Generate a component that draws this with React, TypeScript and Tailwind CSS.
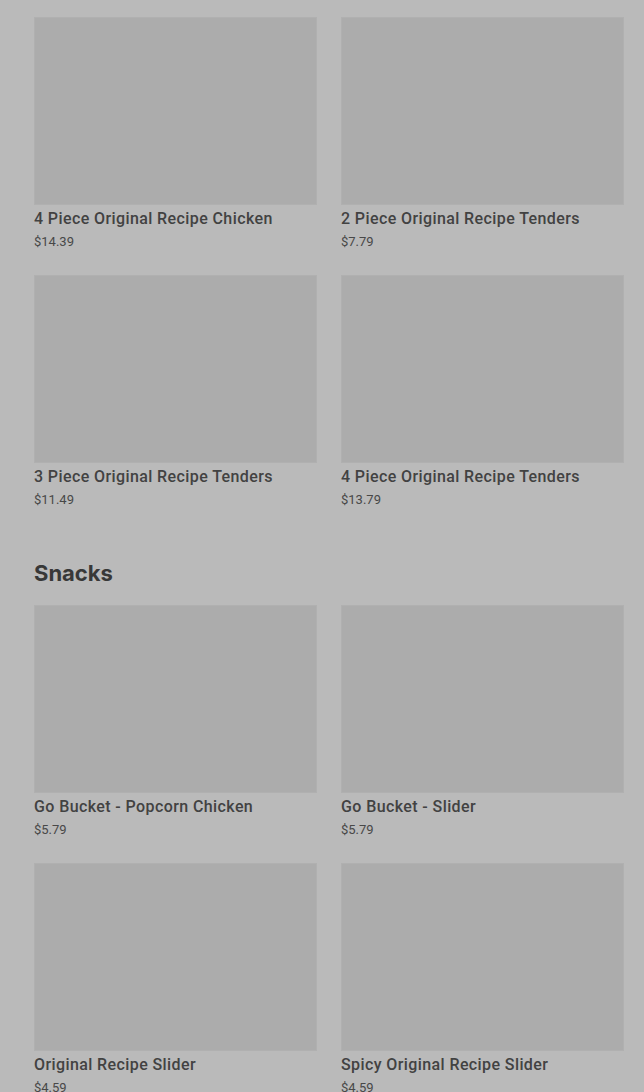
const sections = [
  {
    title: null as string | null,
    items: [
      { name: '4 Piece Original Recipe Chicken', price: '$14.39' },
      { name: '2 Piece Original Recipe Tenders', price: '$7.79' },
      { name: '3 Piece Original Recipe Tenders', price: '$11.49' },
      { name: '4 Piece Original Recipe Tenders', price: '$13.79' },
    ],
  },
  {
    title: 'Snacks',
    items: [
      { name: 'Go Bucket - Popcorn Chicken', price: '$5.79' },
      { name: 'Go Bucket - Slider', price: '$5.79' },
      { name: 'Original Recipe Slider', price: '$4.59' },
      { name: 'Spicy Original Recipe Slider', price: '$4.59' },
    ],
  },
];

export default function App() {
  return (
    <div className="h-[1092px] overflow-hidden bg-[#bababa] pl-[34px] pr-[20px] pt-[17px]" style={{ fontFamily: 'Roboto, "Liberation Sans", sans-serif' }}>
      {sections.map((s, i) => (
        <div key={i} className={i > 0 ? 'mt-[48px]' : ''}>
          {s.title && (
            <h2 className="mb-4 text-[22px] font-bold leading-8 text-[#383838]" style={{ fontFamily: 'Inter, sans-serif' }}>
              {s.title}
            </h2>
          )}
          <div className="grid grid-cols-2 gap-x-6 gap-y-[24px]">
            {s.items.map(item => (
              <div key={item.name}>
                <div className="h-[188px] border border-[#b0b0b0] bg-[#acacac]" />
                <div className="mt-[4px] text-base font-medium leading-5 tracking-[0.4px] text-[#424242]">{item.name}</div>
                <div className="mt-1 text-[13px] leading-[18px] text-[#484848]">{item.price}</div>
              </div>
            ))}
          </div>
        </div>
      ))}
    </div>
  );
}
